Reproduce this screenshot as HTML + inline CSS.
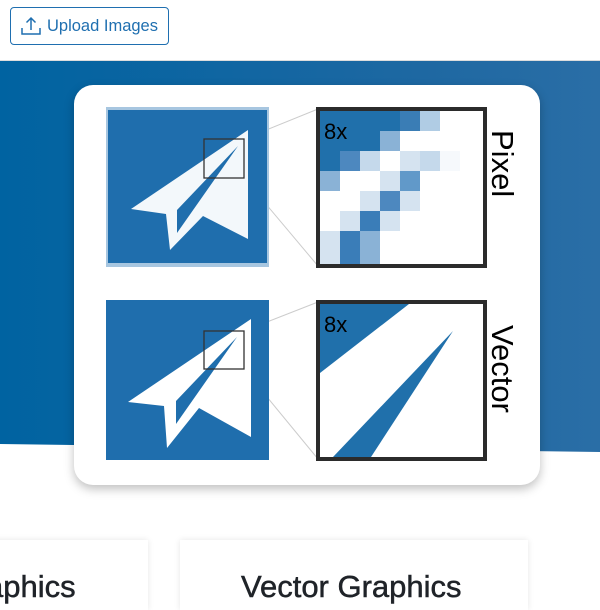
<!DOCTYPE html>
<html><head><style>
*{margin:0;padding:0;box-sizing:border-box}
body{width:600px;height:600px;overflow:hidden;background:#fff;font-family:"Liberation Sans",sans-serif;position:relative}
.btn{position:absolute;left:10px;top:7px;width:159px;height:38px;border:1px solid #1f6fb0;border-radius:4px;color:#1f6fb0;font-size:16.5px;line-height:37px;padding-left:36px}
.band{position:absolute;left:0;top:60px;width:600px;height:393px;background:linear-gradient(90deg,#0063a1,#1e68a2 70%,#2a6ea6);clip-path:polygon(0 0,100% 0,100% 392px,0 384px);border-top:1px solid #ddd}
.card{position:absolute;left:74px;top:85px;width:466px;height:400px;background:#fff;border-radius:19px;box-shadow:0 4px 10px rgba(0,0,0,.25)}
.bc{position:absolute;top:540px;height:70px;background:#fff;box-shadow:0 0 6px rgba(0,0,0,.1)}
.bt{position:absolute;top:569px;font-size:31px;color:#1f2328;white-space:nowrap;-webkit-text-stroke:0.5px #1f2328}
.lab{position:absolute;font-size:31px;color:#000;transform:rotate(90deg);transform-origin:left top;white-space:nowrap}
</style></head><body>
<div class="btn"><svg style="position:absolute;left:10px;top:8px" width="20" height="20" viewBox="0 0 20 20" fill="none" stroke="#1f6fb0" stroke-width="1.5"><path d="M10 14V2M5.5 6.5L10 2l4.5 4.5M1 12v6h18v-6"/></svg>Upload Images</div>
<div class="band"></div>
<div class="bc" style="left:-10px;width:158px"></div>
<div class="bc" style="left:180px;width:348px"></div>
<div class="bt" style="left:-14px">aphics</div>
<div class="bt" style="left:241px">Vector Graphics</div>
<div class="card"></div>
<svg style="position:absolute;left:0;top:0" width="600" height="600">
<g stroke="#ccc" stroke-width="1">
<line x1="244" y1="139" x2="318" y2="109"/><line x1="244" y1="178" x2="318" y2="266"/>
<line x1="244" y1="331" x2="318" y2="302"/><line x1="244" y1="369" x2="318" y2="459"/>
</g>
<rect x="106" y="107" width="163" height="160" fill="#a7c6e0"/>
<rect x="108" y="110" width="159" height="153" fill="#1f6ead"/>
<path d="M248 130L248 239L203 216L170 250L166 214L131 209Z" fill="#fff" opacity=".95"/>
<path d="M177 210L177 233L238 146Z" fill="#1f6ead"/>
<rect x="106" y="300" width="163" height="160" fill="#1f6ead"/>
<path d="M251 319L251 437L199 408L167 448L164 406L128 402Z" fill="#fff"/>
<path d="M176 401L176 424L237 337Z" fill="#1f6ead"/>
<rect x="204" y="139" width="40" height="39" fill="none" stroke="#333" stroke-width="1.3"/>
<rect x="204" y="331" width="40" height="38" fill="none" stroke="#333" stroke-width="1.3"/>
<g transform="translate(320,111)">
<rect width="163" height="155" fill="#fff"/>
<rect x="0" y="0" width="80" height="20" fill="#2070ab"/><rect x="80" y="0" width="20" height="20" fill="#3a7db5"/><rect x="100" y="0" width="20" height="20" fill="#b0cce4"/>
<rect x="0" y="20" width="60" height="20" fill="#2070ab"/><rect x="60" y="20" width="20" height="20" fill="#8ab2d6"/>
<rect x="0" y="40" width="20" height="20" fill="#2070ab"/><rect x="20" y="40" width="20" height="20" fill="#4d88bf"/><rect x="40" y="40" width="20" height="20" fill="#c5d9eb"/><rect x="80" y="40" width="20" height="20" fill="#d5e3f0"/><rect x="100" y="40" width="20" height="20" fill="#c5d9eb"/><rect x="120" y="40" width="20" height="20" fill="#f6f9fc"/>
<rect x="0" y="60" width="20" height="20" fill="#8ab2d6"/><rect x="60" y="60" width="20" height="20" fill="#d5e3f0"/><rect x="80" y="60" width="20" height="20" fill="#6199c9"/>
<rect x="40" y="80" width="20" height="20" fill="#d5e3f0"/><rect x="60" y="80" width="20" height="20" fill="#4d88bf"/><rect x="80" y="80" width="20" height="20" fill="#d5e3f0"/>
<rect x="20" y="100" width="20" height="20" fill="#d5e3f0"/><rect x="40" y="100" width="20" height="20" fill="#3a7db8"/><rect x="60" y="100" width="20" height="20" fill="#d5e3f0"/>
<rect x="0" y="120" width="20" height="35" fill="#d5e3f0"/><rect x="20" y="120" width="20" height="35" fill="#3a7db8"/><rect x="40" y="120" width="20" height="35" fill="#8ab2d6"/>
</g>
<rect x="318" y="109" width="167" height="157" fill="none" stroke="#2b2b2b" stroke-width="4"/>
<rect x="318" y="302" width="167" height="157" fill="#fff" stroke="#2b2b2b" stroke-width="4"/>
<path d="M320 304L409 304L320 373Z" fill="#2070ab"/>
<path d="M453 331L333 457L371 457Z" fill="#2070ab"/>
<text x="324" y="139" font-size="22" font-family="Liberation Sans">8x</text>
<text x="324" y="332" font-size="22" font-family="Liberation Sans">8x</text>
</svg>
<div class="lab" style="left:520px;top:130px">Pixel</div>
<div class="lab" style="left:520px;top:325px">Vector</div>
</body></html>
